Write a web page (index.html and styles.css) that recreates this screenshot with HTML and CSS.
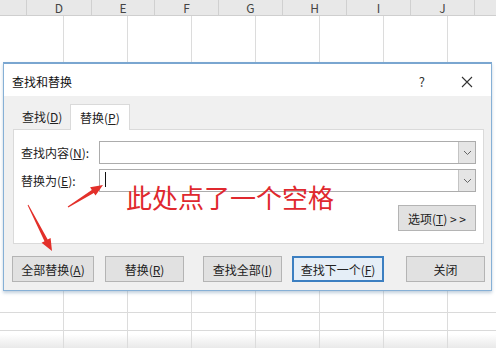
FILE: index.html
```html
<!DOCTYPE html>
<html lang="zh">
<head>
<meta charset="utf-8">
<link rel="stylesheet" href="styles.css">
</head>
<body>
<div class="sheet">
  <div class="colhead">
    <div class="c c0"></div>
    <div class="c c1">D</div>
    <div class="c c2">E</div>
    <div class="c">F</div>
    <div class="c">G</div>
    <div class="c">H</div>
    <div class="c">I</div>
    <div class="c">J</div>
    <div class="c cl"></div>
  </div>
  <div class="grid">
    <div class="g c0"></div>
    <div class="g c1"></div>
    <div class="g c2"></div>
    <div class="g"></div>
    <div class="g"></div>
    <div class="g"></div>
    <div class="g"></div>
    <div class="g"></div>
    <div class="g cl"></div>
  </div>

  <div class="dialog">
    <div class="titlebar">
      <span class="title">查找和替换</span>
      <span class="help">?</span>
      <svg class="close" width="12" height="12" viewBox="0 0 12 12"><path d="M1 1L11 11M11 1L1 11" stroke="#333" stroke-width="1.1" fill="none"/></svg>
    </div>
    <div class="dbody">
      <div class="tabs">
        <div class="tab">查找(<u>D</u>)</div>
        <div class="tab active">替换(<u>P</u>)</div>
      </div>
      <div class="panel">
        <div class="row">
          <span class="label">查找内容(<u>N</u>):</span>
          <div class="combo"><div class="field"></div><div class="drop"><svg width="9" height="6" viewBox="0 0 9 6"><path d="M1 1L4.5 4.5L8 1" stroke="#666" stroke-width="1" fill="none"/></svg></div></div>
        </div>
        <div class="row row2">
          <span class="label">替换为(<u>E</u>):</span>
          <div class="combo"><div class="field"><span class="caret"></span></div><div class="drop"><svg width="9" height="6" viewBox="0 0 9 6"><path d="M1 1L4.5 4.5L8 1" stroke="#666" stroke-width="1" fill="none"/></svg></div></div>
        </div>
        <div class="optrow">
          <div class="btn opt">选项(<u>T</u>) &gt; &gt;</div>
        </div>
      </div>
      <div class="btnrow">
        <div class="btn b1">全部替换(<u>A</u>)</div>
        <div class="btn b2">替换(<u>R</u>)</div>
        <div class="btn b3">查找全部(<u>I</u>)</div>
        <div class="btn b4 focus">查找下一个(<u>F</u>)</div>
        <div class="btn b5">关闭</div>
      </div>
    </div>
  </div>

  <div class="note">此处点了一个空格</div>
  <svg class="arrows" width="496" height="348" viewBox="0 0 496 348">
    <polygon fill="#e3302a" points="67.7,206.6 91.8,189.9 90.1,187.2 103,185 95.5,195.6 93.8,192.9 68.3,207.4"/>
    <polygon fill="#e3302a" points="27.6,205.2 44.5,241.2 41.6,242.7 52,251 50.6,238.1 47.7,239.6 28.4,204.8"/>
  </svg>
</div>
</body>
</html>
```

FILE: styles.css
```css
* { box-sizing: border-box; }
html, body { margin: 0; padding: 0; }
body {
  width: 496px;
  height: 348px;
  overflow: hidden;
  background: #fff;
  font-family: "Noto Sans CJK SC", "Noto Sans", sans-serif;
  font-size: 12px;
  color: #222;
}
u { text-decoration: underline; text-underline-offset: 1px; }
.sheet {
  position: relative;
  width: 496px;
  height: 348px;
  overflow: hidden;
}
.colhead {
  display: flex;
  height: 16px;
  background: #e8e8e8;
  border-bottom: 1px solid #cfcfcf;
}
.c {
  width: 64px;
  flex: none;
  border-right: 1px solid #d0d0d0;
  text-align: center;
  font-size: 12px;
  line-height: 15px;
  color: #444;
}
.c0 { width: 27px; }
.c1 { width: 65px; }
.c2 { width: 63px; }
.cl { width: 21px; border-right: none; }
.grid {
  display: flex;
  height: 332px;
  background:
    linear-gradient(#dadada, #dadada) 0 296px / 100% 1px no-repeat,
    linear-gradient(#dadada, #dadada) 0 314px / 100% 1px no-repeat,
    linear-gradient(rgba(230,230,230,0), #e9e9e9) 0 318px / 100% 14px no-repeat;
}
.g {
  width: 64px;
  flex: none;
  border-right: 1px solid #dcdcdc;
}
.g.cl { border-right: none; }

.dialog {
  position: absolute;
  left: 3px;
  top: 62px;
  width: 489px;
  height: 229px;
  border: 1px solid #86b0d6;
  border-top: 2px solid #7aa6d0;
  background: #f0f0f0;
  box-shadow: 0 2px 3px rgba(120,150,180,0.45);
  display: flex;
  flex-direction: column;
}
.titlebar {
  height: 32px;
  background: #fff;
  display: flex;
  align-items: center;
  padding-left: 8px;
  padding-top: 3px;
  flex: none;
}
.title { font-size: 12px; color: #111; flex: 1; }
.help { font-size: 13px; color: #333; margin-right: 36px; }
.close { margin-right: 18px; }
.dbody {
  flex: 1;
  padding: 8px 0 0 9px;
  display: flex;
  flex-direction: column;
}
.tabs {
  display: flex;
  height: 26px;
  align-items: flex-end;
  margin-bottom: -1px;
}
.tab {
  height: 24px;
  width: 57px;
  padding-left: 9px;
  line-height: 22px;
  font-size: 12px;
  color: #222;
}
.tab.active {
  width: 60px;
  height: 26px;
  background: #fff;
  border: 1px solid #dadada;
  border-bottom: none;
  padding-left: 9px;
  line-height: 26px;
  position: relative;
  z-index: 1;
}
.panel {
  width: 471px;
  height: 115px;
  background: #fff;
  border: 1px solid #dadada;
  padding: 11px 7px 0 7px;
  display: flex;
  flex-direction: column;
}
.row {
  display: flex;
  align-items: center;
  height: 23px;
}
.row2 { margin-top: 5px; }
.label {
  width: 78px;
  flex: none;
  font-size: 12px;
  color: #222;
}
.combo {
  flex: 1;
  height: 23px;
  display: flex;
  border: 1px solid #acacac;
  background: #fff;
}
.field {
  flex: 1;
  position: relative;
}
.caret {
  position: absolute;
  left: 5px;
  top: 2px;
  width: 1px;
  height: 15px;
  background: #111;
}
.drop {
  width: 17px;
  flex: none;
  background: #e5e5e5;
  border-left: 1px solid #c4c4c4;
  display: flex;
  align-items: center;
  justify-content: center;
}
.optrow {
  display: flex;
  justify-content: flex-end;
  margin-top: 13px;
}
.btn {
  height: 26px;
  background: #e1e1e1;
  border: 1px solid #b4b4b4;
  display: flex;
  align-items: center;
  justify-content: center;
  font-size: 12px;
  color: #222;
  flex: none;
}
.opt { width: 78px; }
.btnrow {
  display: flex;
  margin-top: 12px;
  margin-left: -1px;
}
.b1 { width: 82px; }
.b2 { width: 79px; margin-left: 11px; }
.b3 { width: 79px; margin-left: 19px; }
.b4 { width: 92px; margin-left: 10px; }
.b5 { width: 79px; margin-left: 22px; }
.focus { border: 2px solid #3c7fc1; background: #e5eef7; }

.note {
  position: absolute;
  left: 126px;
  top: 180px;
  font-size: 26px;
  line-height: 34px;
  color: #e0282e;
}
.arrows {
  position: absolute;
  left: 0;
  top: 0;
  pointer-events: none;
}
```
